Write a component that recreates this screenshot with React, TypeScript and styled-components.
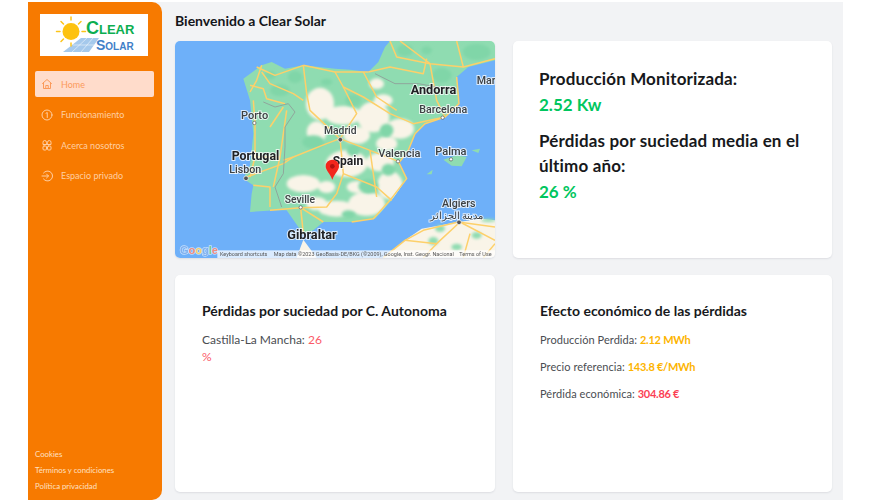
import React from 'react';
import styled, { createGlobalStyle } from 'styled-components';

const GlobalStyle = createGlobalStyle`
  html, body {
    margin: 0;
    padding: 0;
    background: #fff;
    font-family: "Lato", "Liberation Sans", sans-serif;
  }
`;

const Page = styled.div`
  width: 815px;
  height: 498px;
  margin: 2px 0 0 28px;
  display: flex;
  background: #f2f3f5;
  overflow: hidden;
`;

const Sidebar = styled.nav`
  width: 134px;
  flex: none;
  background: #f77a00;
  border-radius: 0 10px 10px 0;
  padding: 10px 8px 9px 7px;
  box-sizing: border-box;
  display: flex;
  flex-direction: column;
`;

const LogoBox = styled.div`
  width: 108px;
  height: 42px;
  margin: 2px 0 0 5px;
  background: #fff;
`;

const Menu = styled.div`
  margin-top: 15px;
  display: flex;
  flex-direction: column;
  gap: 4.5px;
`;

const MenuItem = styled.a<{ $active?: boolean }>`
  height: 26px;
  display: flex;
  align-items: center;
  gap: 8px;
  padding-left: 6px;
  border-radius: 2px;
  font-size: 9px;
  color: ${p => (p.$active ? '#fb9a5b' : '#ffcfa3')};
  background: ${p => (p.$active ? '#ffdccb' : 'transparent')};
`;

const FooterLinks = styled.div`
  margin-top: auto;
  display: flex;
  flex-direction: column;
  gap: 6px;
`;

const FooterLink = styled.a`
  font-size: 7.8px;
  line-height: 10px;
  color: #ffe0c2;
`;

const Content = styled.main`
  flex: 1;
  padding: 10px 11px 0 13px;
`;

const Title = styled.h1`
  margin: 0 0 11px;
  font-size: 14px;
  line-height: 18px;
  font-weight: 700;
  color: #14161a;
`;

const Grid = styled.div`
  display: grid;
  grid-template-columns: 320px 319px;
  grid-template-rows: 217px 217px;
  column-gap: 18px;
  row-gap: 17px;
`;

const Card = styled.section`
  background: #fff;
  border-radius: 5px;
  box-shadow: 0 1px 2px rgba(30, 40, 60, 0.1);
  padding: 26px 27px;
  box-sizing: border-box;
  overflow: hidden;
`;

const MapCard = styled(Card)`
  padding: 0;
`;

const StatsCard = styled(Card)`
  padding: 25px 26px;
`;

const BigLabel = styled.p`
  margin: 0;
  font-size: 17px;
  line-height: 25px;
  font-weight: 700;
  letter-spacing: 0.15px;
  color: #17191c;
`;

const BigValue = styled.p`
  margin: 1px 0 11px;
  font-size: 17px;
  line-height: 25px;
  font-weight: 700;
  color: #00c65e;
`;

const CardTitle = styled.h2`
  margin: 0 0 10px;
  font-size: 14px;
  line-height: 20px;
  font-weight: 700;
  color: #17191c;
`;

const Line = styled.p<{ $small?: boolean }>`
  margin: 0 0 10px;
  font-size: ${p => (p.$small ? '11px' : '12px')};
  letter-spacing: ${p => (p.$small ? '0.05px' : '0')};
  line-height: 17px;
  color: #4a4d52;
`;

const Narrow = styled(Line)`
  width: 130px;
`;

const Num = styled.b<{ $tone: 'amber' | 'red' | 'pink' }>`
  font-weight: ${p => (p.$tone === 'pink' ? 400 : 700)};
  letter-spacing: ${p => (p.$tone === 'pink' ? '0' : '-0.25px')};
  color: ${p => ({ amber: '#fdb400', red: '#fb3f55', pink: '#fb5a68' }[p.$tone])};
`;

const Icon = styled.svg`
  width: 12px;
  height: 12px;
  flex: none;
  fill: none;
  stroke: currentColor;
  stroke-width: 2;
  stroke-linecap: round;
  stroke-linejoin: round;
`;

const LogoSvg = styled.svg`
  display: block;
  width: 108px;
  height: 42px;
`;

const MapSvg = styled.svg`
  display: block;
  width: 320px;
  height: 217px;
  filter: blur(0.35px);
`;

const Logo = () => (
  <LogoSvg viewBox="0 0 108 42">
    <polygon points="23,38 41,24 59,24 49,38" fill="#a5c9ec" />
    <g stroke="#fff" strokeWidth=".5">
      <line x1="47" y1="24" x2="32" y2="38" />
      <line x1="53" y1="24" x2="41" y2="38" />
      <line x1="33" y1="31" x2="54" y2="31" />
    </g>
    <circle cx="31" cy="17.5" r="8.5" fill="#fdc20f" />
    <g stroke="#fcc419" strokeWidth="1.5" strokeLinecap="round">
      <line x1="31" y1="3" x2="31" y2="6" />
      <line x1="16.5" y1="17.5" x2="20" y2="17.5" />
      <line x1="42" y1="17.5" x2="45.5" y2="17.5" />
      <line x1="21" y1="7.5" x2="23.5" y2="10" />
      <line x1="41" y1="7.5" x2="38.5" y2="10" />
      <line x1="21" y1="27.5" x2="23.5" y2="25" />
      <line x1="31" y1="29" x2="31" y2="32" />
    </g>
    <text x="46" y="20" fontFamily="Liberation Sans, sans-serif" fontWeight="700" fontSize="18" fill="#0cae50">
      C<tspan fontSize="13">LEAR</tspan>
    </text>
    <text x="56" y="35.5" fontFamily="Liberation Sans, sans-serif" fontWeight="700" fontSize="14" fill="#3f80c8">
      S<tspan fontSize="10">OLAR</tspan>
    </text>
  </LogoSvg>
);

const HomeIcon = () => (
  <Icon viewBox="0 0 24 24">
    <path d="M3 11 12 3l9 8" />
    <path d="M5 9.5V21h14V9.5" />
    <path d="M9.5 21v-6h5v6" />
  </Icon>
);

const InfoIcon = () => (
  <Icon viewBox="0 0 24 24">
    <circle cx="12" cy="12" r="10" />
    <path d="M10 8.5 12.5 7v10" />
  </Icon>
);

const TilesIcon = () => (
  <Icon viewBox="0 0 24 24">
    <path d="M11 11H4V6.5A3.5 3.5 0 0 1 11 6.5Z" />
    <path d="M13 11h7V6.5A3.5 3.5 0 0 0 13 6.5Z" />
    <rect x="4" y="14" width="7" height="8" rx="2" />
    <rect x="13" y="14" width="7" height="8" rx="2" />
  </Icon>
);

const EnterIcon = () => (
  <Icon viewBox="0 0 24 24">
    <path d="M5 6a10 10 0 1 1 0 12" />
    <path d="M2 12h13" />
    <path d="m11 8 4 4-4 4" />
  </Icon>
);

const MapLabel = styled.text<{ $size?: number; $weight?: number }>`
  font-family: "Roboto", "Liberation Sans", sans-serif;
  font-size: ${p => p.$size ?? 32}px;
  font-weight: ${p => p.$weight ?? 500};
  fill: ${p => (p.$weight === 700 ? '#202124' : '#3c4043')};
  stroke: #fff;
  stroke-width: 6px;
  stroke-opacity: 0.75;
  paint-order: stroke;
`;

const Attribution = styled.text`
  font-family: "Roboto", "Liberation Sans", sans-serif;
  font-size: 16.4px;
  fill: #555;
`;

const GoogleMark = styled.text`
  font-family: "Liberation Sans", sans-serif;
  font-weight: 700;
  font-size: 33px;
  stroke: #fff;
  stroke-width: 4px;
  stroke-opacity: 0.6;
  paint-order: stroke;
`;

const land =
  'M660 122 L645 140 L625 185 L595 215 L540 208 L495 205 L400 195 L345 205 L305 185 L275 195 L220 235 L240 300 L250 400 L245 450 L240 495 L220 535 L250 555 L245 580 L240 635 L315 630 L350 630 L385 680 L400 700 L430 690 L460 665 L545 665 L615 655 L665 600 L710 535 L685 490 L715 450 L735 400 L765 370 L825 350 L867 310 L860 230 L895 200 L975 180 L975 122 Z';

// cx, cy, rx, ry of the soft patches of the map
const creamPatches = [
  [450, 310, 42, 48], [520, 345, 55, 28], [610, 350, 48, 46], [690, 385, 42, 30], [640, 300, 28, 18],
  [440, 395, 30, 32], [560, 405, 40, 26], [650, 430, 32, 22], [620, 250, 22, 16],
  [530, 490, 62, 40], [630, 485, 42, 28], [660, 555, 38, 42], [590, 610, 55, 36], [500, 625, 55, 24],
  [400, 550, 50, 26], [440, 610, 32, 20], [470, 560, 26, 18], [560, 560, 30, 18],
];

const greenPatches = [
  [375, 230, 22, 18], [330, 270, 30, 18], [300, 225, 18, 12], [550, 300, 24, 18], [705, 150, 24, 18],
  [920, 155, 42, 24], [815, 225, 30, 22], [430, 425, 34, 20], [655, 508, 20, 18], [595, 558, 30, 22],
  [535, 642, 20, 12], [650, 390, 20, 20], [550, 450, 20, 18], [470, 245, 18, 10], [770, 150, 16, 12],
];

const africaPatches = [
  [810, 685, 15, 10], [790, 722, 15, 12], [920, 705, 15, 10], [955, 660, 22, 5], [860, 740, 16, 10],
];

const roads = [
  'M275 195 L260 240 L240 275',
  'M260 200 L315 225 L400 195',
  'M275 215 L300 250 L370 280 L400 300',
  'M240 255 L280 265 L290 295 L345 310',
  'M400 195 L410 280 L420 330 L510 415',
  'M400 195 L495 215 L595 215',
  'M495 215 L520 260 L580 290 L660 340 L730 370 L825 350',
  'M580 215 L620 290 L680 330',
  'M595 215 L660 200 L760 220 L770 175',
  'M660 122 L680 170 L780 190 L880 200 L975 175',
  'M690 122 L780 190 L800 300 L825 350',
  'M860 122 L880 200',
  'M510 415 L520 520 L500 580 L470 620 L392 622 L300 630',
  'M510 415 L600 450 L685 483 L710 535 L660 600 L610 655 L545 665',
  'M510 415 L470 430 L370 470 L340 480',
  'M230 530 L340 490 L370 470',
  'M250 555 L300 560 L300 620',
  'M520 520 L620 560 L665 600',
  'M392 622 L400 700',
  'M600 450 L620 590',
  'M460 665 L392 622',
  'M250 300 L255 370 L255 470 L240 530',
  'M255 470 L330 470',
  'M300 380 L340 320',
  'M350 330 L330 470 L310 560',
  'M510 415 L560 340 L520 260',
  'M735 400 L765 370 L825 350 L867 310 L860 230',
  'M685 490 L715 450 L735 400',
  'M640 772 L705 720 L760 690 L865 665 L975 680',
  'M705 720 L800 730 L870 665 L975 720',
  'M760 772 L800 730',
  'M880 772 L900 700',
  'M940 772 L975 730',
];

const SpainMap = () => (
  <MapSvg viewBox="15 122 960 651">
    <defs>
      <filter id="soft">
        <feGaussianBlur stdDeviation="4" />
      </filter>
      <clipPath id="spain">
        <path d={land} />
      </clipPath>
    </defs>
    <rect x="15" y="122" width="960" height="651" fill="#6eb0f9" />
    <path d={land} fill="#8fdcb1" />
    <path d="M640 772 L705 720 L755 685 L865 665 L935 655 L975 660 L975 772 Z" fill="#f9f4e8" />
    <path d="M380 772 L400 718 L440 772 Z" fill="#f9f4e8" />
    <path d="M820 478 L860 465 L890 470 L875 498 L845 496 Z M905 450 L930 445 L925 458 Z M770 522 L788 508 L785 522 Z" fill="#8fdcb1" />
    <g clipPath="url(#spain)">
      <g fill="#f9f4e8" filter="url(#soft)">
        {creamPatches.map(([cx, cy, rx, ry]) => <ellipse key={`${cx}-${cy}`} cx={cx} cy={cy} rx={rx} ry={ry} />)}
      </g>
      <g fill="#80d6a8" filter="url(#soft)">
        {greenPatches.map(([cx, cy, rx, ry]) => <ellipse key={`${cx}-${cy}`} cx={cx} cy={cy} rx={rx} ry={ry} />)}
      </g>
    </g>
    <g fill="#8fdcb1" filter="url(#soft)">
      {africaPatches.map(([cx, cy, rx, ry]) => <ellipse key={`${cx}-${cy}`} cx={cx} cy={cy} rx={rx} ry={ry} />)}
    </g>
    <g fill="none" stroke="#fdd06a" strokeWidth="4.5" strokeLinejoin="round">
      {roads.map(d => <path key={d} d={d} />)}
    </g>
    <path
      d="M280 305 L315 320 L355 310 L375 335 L345 380 L345 440 L340 520 L315 560 L335 620 M615 220 L675 250 L745 250 L855 270"
      fill="none"
      stroke="#8f9b98"
      strokeWidth="2.5"
    />

    <MapLabel x="722" y="281" $size={38} $weight={700}>Andorra</MapLabel>
    <MapLabel x="748" y="339">Barcelona</MapLabel>
    <MapLabel x="920" y="251">Mar</MapLabel>
    <MapLabel x="213" y="355" $size={33}>Porto</MapLabel>
    <MapLabel x="462" y="402" $size={31}>Madrid</MapLabel>
    <MapLabel x="185" y="479" $size={37} $weight={700}>Portugal</MapLabel>
    <MapLabel x="178" y="518">Lisbon</MapLabel>
    <MapLabel x="625" y="470" $size={33}>Valencia</MapLabel>
    <MapLabel x="796" y="463" $size={33}>Palma</MapLabel>
    <MapLabel x="488" y="494" $size={36} $weight={700}>Spain</MapLabel>
    <MapLabel x="344" y="607" $size={31}>Seville</MapLabel>
    <MapLabel x="816" y="620">Algiers</MapLabel>
    <MapLabel x="780" y="656" $size={30}>مدينة الجزائر</MapLabel>
    <MapLabel x="352" y="716" $size={38} $weight={700}>Gibraltar</MapLabel>

    <g fill="#fff" stroke="#555" strokeWidth="2">
      <circle cx="253" cy="368" r="5" />
      <circle cx="818" cy="352" r="5" />
      <circle cx="684" cy="483" r="5" />
      <circle cx="843" cy="477" r="5" />
      <circle cx="392" cy="621" r="5" />
    </g>
    <g fill="#555" stroke="#fff" strokeWidth="2">
      <circle cx="511" cy="418" r="7" />
      <circle cx="228" cy="534" r="7" />
      <circle cx="867" cy="666" r="7" />
    </g>

    <path d="M487 538 C479 518 467 510 467 498 A20 20 0 0 1 507 498 C507 510 495 518 487 538 Z" fill="#f3261c" />
    <circle cx="487" cy="498" r="7" fill="#b3110f" />

    <GoogleMark x="30" y="762">
      <tspan fill="#7fb0ee">G</tspan>
      <tspan fill="#f08a80">o</tspan>
      <tspan fill="#f5cf6a">o</tspan>
      <tspan fill="#7fb0ee">g</tspan>
      <tspan fill="#7ccf94">l</tspan>
      <tspan fill="#f08a80">e</tspan>
    </GoogleMark>
    <rect x="142" y="750" width="833" height="23" fill="#fff" fillOpacity="0.75" />
    <Attribution x="150" y="766">Keyboard shortcuts</Attribution>
    <Attribution x="311" y="766">Map data ©2023 GeoBasis-DE/BKG (©2009), Google, Inst. Geogr. Nacional</Attribution>
    <Attribution x="868" y="766">Terms of Use</Attribution>
  </MapSvg>
);

export default function App() {
  return (
    <>
      <GlobalStyle />
      <Page>
        <Sidebar>
          <LogoBox>
            <Logo />
          </LogoBox>
          <Menu>
            <MenuItem $active><HomeIcon />Home</MenuItem>
            <MenuItem><InfoIcon />Funcionamiento</MenuItem>
            <MenuItem><TilesIcon />Acerca nosotros</MenuItem>
            <MenuItem><EnterIcon />Espacio privado</MenuItem>
          </Menu>
          <FooterLinks>
            <FooterLink>Cookies</FooterLink>
            <FooterLink>Términos y condiciones</FooterLink>
            <FooterLink>Política privacidad</FooterLink>
          </FooterLinks>
        </Sidebar>
        <Content>
          <Title>Bienvenido a Clear Solar</Title>
          <Grid>
            <MapCard>
              <SpainMap />
            </MapCard>
            <StatsCard>
              <BigLabel>Producción Monitorizada:</BigLabel>
              <BigValue>2.52 Kw</BigValue>
              <BigLabel>Pérdidas por suciedad media en el último año:</BigLabel>
              <BigValue>26 %</BigValue>
            </StatsCard>
            <Card>
              <CardTitle>Pérdidas por suciedad por C. Autonoma</CardTitle>
              <Narrow>Castilla-La Mancha: <Num $tone="pink">26 %</Num></Narrow>
            </Card>
            <Card>
              <CardTitle>Efecto económico de las pérdidas</CardTitle>
              <Line $small>Producción Perdida: <Num $tone="amber">2.12 MWh</Num></Line>
              <Line $small>Precio referencia: <Num $tone="amber">143.8 €/MWh</Num></Line>
              <Line $small>Pérdida económica: <Num $tone="red">304.86 €</Num></Line>
            </Card>
          </Grid>
        </Content>
      </Page>
    </>
  );
}
